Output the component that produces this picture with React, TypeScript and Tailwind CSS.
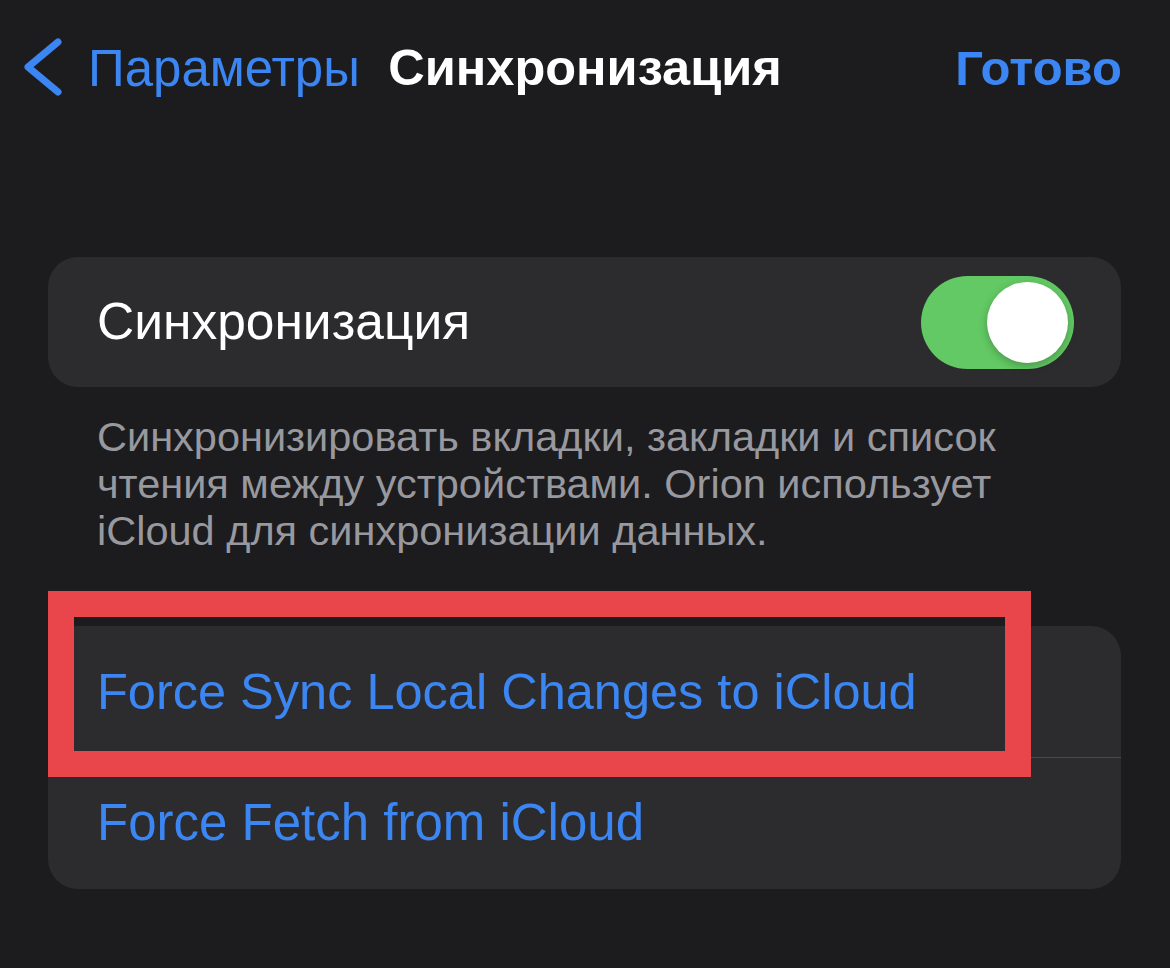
import React from 'react'

const font = { fontFamily: '"Liberation Sans", Arial, sans-serif' }

const BackChevron = () => (
  <svg width="44" height="60" viewBox="0 0 44 60" fill="none">
    <path
      d="M36 4 L6 29 L36 54"
      stroke="#3b86f2"
      strokeWidth="7"
      strokeLinecap="round"
      strokeLinejoin="round"
    />
  </svg>
)

const Toggle = ({ on }: { on: boolean }) => (
  <div
    className={`flex h-[93px] w-[153px] items-center rounded-full px-[6px] ${
      on ? 'justify-end bg-[#63c964]' : 'justify-start bg-[#39393d]'
    }`}
  >
    <div className="h-[81px] w-[81px] rounded-full bg-white shadow-[0_3px_8px_rgba(0,0,0,0.25)]" />
  </div>
)

export default function App() {
  return (
    <main
      className="min-h-[968px] w-full overflow-hidden bg-[#1c1c1e] text-white"
      style={font}
    >
      {/* nav bar, title centred on the screen */}
      <div className="grid h-[136px] grid-cols-[1fr_auto_1fr] items-center px-[22px]">
        <div className="flex items-center gap-[22px]">
          <BackChevron />
          <span className="text-[51px] leading-none text-[#3b86f2]">
            Параметры
          </span>
        </div>
        <span className="text-[50.5px] font-bold leading-none">Синхронизация</span>
        <span className="justify-self-end pr-[26px] text-[49px] font-bold leading-none text-[#3b86f2]">
          Готово
        </span>
      </div>

      <div className="mt-[121px] pl-[48px] pr-[49px]">
        <div className="flex h-[130px] items-center justify-between rounded-[30px] bg-[#2c2c2e] pl-[49px] pr-[47px]">
          <span className="text-[51.5px]">Синхронизация</span>
          <Toggle on />
        </div>

        <p className="mt-[26px] pl-[49px] text-[41.5px] leading-[47px] text-[#98989f]">
          Синхронизировать вкладки, закладки и список
          <br />
          чтения между устройствами. Orion использует
          <br />
          iCloud для синхронизации данных.
        </p>

        <div className="relative mt-[72px]">
          <div className="overflow-hidden rounded-[30px] bg-[#2c2c2e]">
            <div className="flex h-[131px] items-center pl-[49px] text-[50.5px] text-[#3b86f2]">
              Force Sync Local Changes to iCloud
            </div>
            <div className="ml-[49px] h-px bg-[#48484c]" />
            <div className="flex h-[131px] items-center pl-[49px] text-[51px] text-[#3b86f2]">
              Force Fetch from iCloud
            </div>
          </div>
          {/* red highlight frame drawn over the first row */}
          <div className="pointer-events-none absolute left-0 top-[-35px] h-[186px] w-[983px] border-[26px] border-[#e8464b]" />
        </div>
      </div>
    </main>
  )
}
